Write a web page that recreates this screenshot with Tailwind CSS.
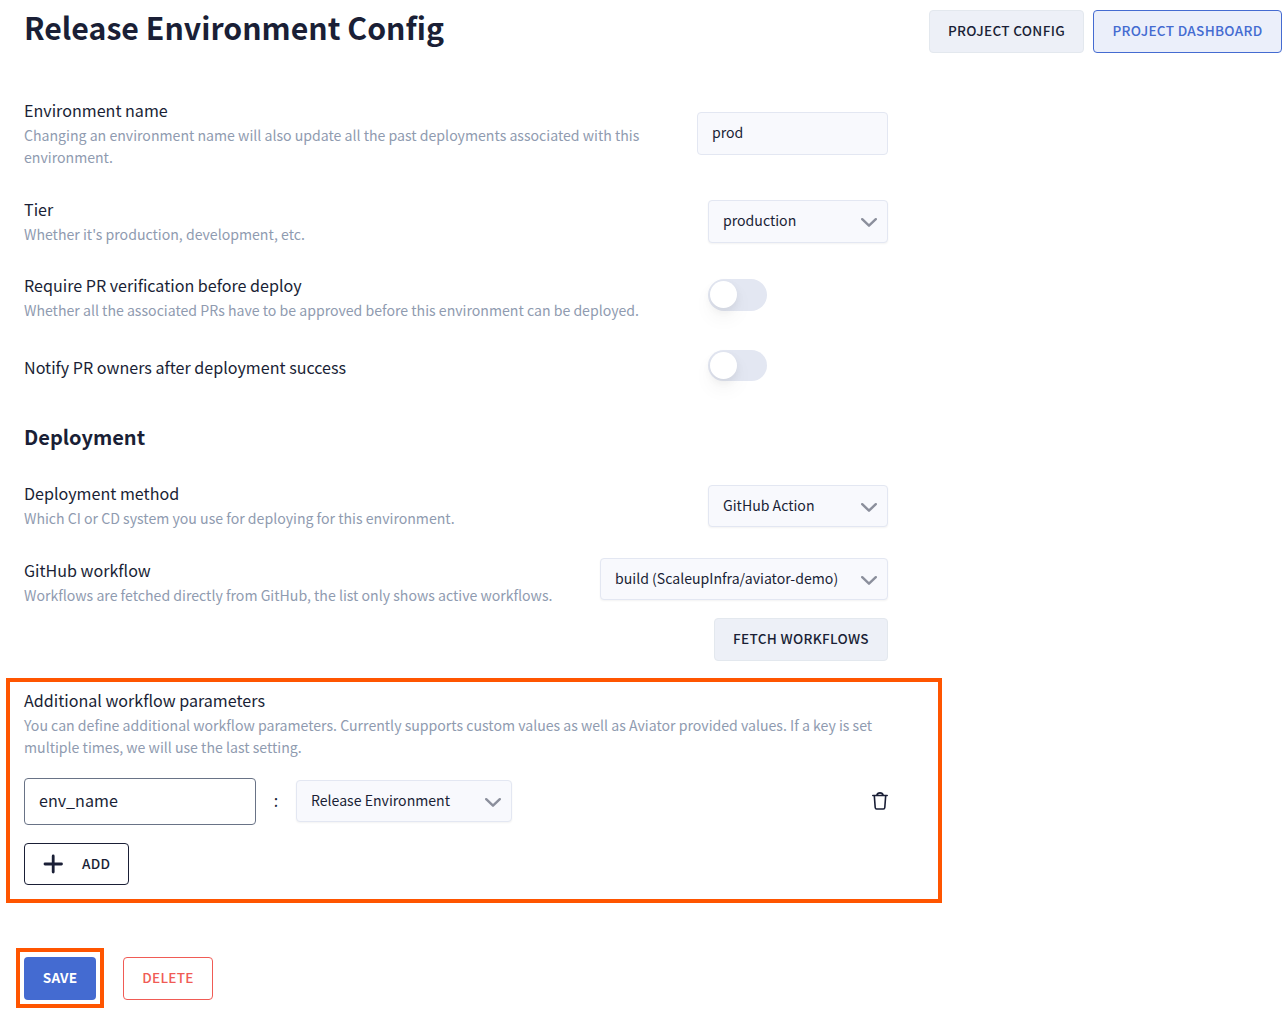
<!DOCTYPE html>
<html lang="en">
<head>
<meta charset="utf-8">
<title>Release Environment Config</title>
<script src="https://cdn.jsdelivr.net/npm/@tailwindcss/browser@4"></script>
</head>
<body class="bg-white text-[#1a1f36] font-['Noto_Sans_CJK_SC','Noto_Sans',sans-serif] w-[1287px] h-[1012px] overflow-hidden">
<header class="flex justify-between items-start pl-6 pr-[5px] pt-[10px] h-[97px]">
  <h1 class="-mt-[2px] text-[30.250px] leading-[38px] font-bold"><span>Release Environment Config</span></h1>
  <nav class="flex gap-[9px] text-[13.600px] tracking-[0.3px] font-medium">
    <button class="w-[155px] h-[43px] pb-[2px] rounded bg-[#edf0f7] border border-[#e3e8ee]"><span>PROJECT CONFIG</span></button>
    <button class="w-[189px] h-[43px] pb-[2px] rounded bg-[#ebeffa] border border-[#446bd1] text-[#446bd1]"><span>PROJECT DASHBOARD</span></button>
  </nav>
</header>
<main class="pl-6 w-[888px]">
  <section class="flex justify-between items-start h-[99px]">
    <div class="w-[640px]">
      <h3 class="text-[16.1px] leading-[27px]"><span>Environment name</span></h3>
      <p class="text-[14.110px] leading-[22px] text-[#8f9bb0]"><span>Changing an environment name will also update all the past deployments associated with this</span><br>environment.</p>
    </div>
    <div class="mt-[15px] w-[191px] h-[43px] shrink-0 rounded bg-[#f8f9fd] border border-[#e3e7f2] pl-[14px] text-[14.100px] leading-[38px]"><span>prod</span></div>
  </section>
  <section class="flex justify-between items-start h-[76px]">
    <div>
      <h3 class="text-[16.1px] leading-[27px]"><span>Tier</span></h3>
      <p class="text-[14.110px] leading-[22px] text-[#8f9bb0]"><span>Whether it's production, development, etc.</span></p>
    </div>
    <div class="mt-[4px] w-[180px] h-[43px] flex items-center justify-between rounded bg-[#f8f9fd] border border-[#e3e7f2] shadow-xs pl-[14px] pr-[10px] text-[14.100px] leading-[20px]"><span class="pb-[3px]">production</span>
      <svg class="w-4 h-[9px] mt-[2px]" viewBox="0 0 16 9" fill="none" stroke="#8b8f9c" stroke-width="2.400" stroke-linecap="round" stroke-linejoin="round"><path d="M1.200 1.200 8 7.700l6.800-6.500"/></svg></div>
  </section>
  <section class="flex justify-between items-start h-[82px]">
    <div>
      <h3 class="text-[16.1px] leading-[27px]"><span>Require PR verification before deploy</span></h3>
      <p class="text-[14.110px] leading-[22px] text-[#8f9bb0]"><span>Whether all the associated PRs have to be approved before this environment can be deployed.</span></p>
    </div>
    <div class="mt-[7px] mr-[121px] w-[59px] h-8 rounded-full bg-[#e3e7f2] p-[2px]"><div class="size-[27px] rounded-full bg-white shadow-[0_3px_8px_rgba(0,0,0,0.06),0_10px_20px_rgba(0,0,0,0.05)]"></div></div>
  </section>
  <section class="flex justify-between items-start h-[66px]">
    <h3 class="text-[16.1px] leading-[27px]"><span>Notify PR owners after deployment success</span></h3>
    <div class="-mt-[4px] mr-[121px] w-[59px] h-[31px] rounded-full bg-[#e3e7f2] p-[2px]"><div class="size-[27px] rounded-full bg-white shadow-[0_3px_8px_rgba(0,0,0,0.06),0_10px_20px_rgba(0,0,0,0.05)]"></div></div>
  </section>
  <h2 class="h-[60px] text-[20px] leading-[34px] font-bold"><span>Deployment</span></h2>
  <section class="flex justify-between items-start h-[77px]">
    <div>
      <h3 class="text-[16.1px] leading-[27px]"><span>Deployment method</span></h3>
      <p class="text-[14.110px] leading-[22px] text-[#8f9bb0]"><span>Which CI or CD system you use for deploying for this environment.</span></p>
    </div>
    <div class="mt-[5px] w-[180px] h-[42px] flex items-center justify-between rounded bg-[#f8f9fd] border border-[#e3e7f2] shadow-xs pl-[14px] pr-[10px] text-[14.100px] leading-[20px]"><span class="pb-[2px]">GitHub Action</span>
      <svg class="w-4 h-[9px] mt-[2px]" viewBox="0 0 16 9" fill="none" stroke="#8b8f9c" stroke-width="2.400" stroke-linecap="round" stroke-linejoin="round"><path d="M1.200 1.200 8 7.700l6.800-6.500"/></svg></div>
  </section>
  <section class="flex justify-between items-start h-[121px]">
    <div>
      <h3 class="text-[16.1px] leading-[27px]"><span>GitHub workflow</span></h3>
      <p class="text-[14.110px] leading-[22px] text-[#8f9bb0]"><span>Workflows are fetched directly from GitHub, the list only shows active workflows.</span></p>
    </div>
    <div class="flex flex-col items-end gap-[18px] mt-px">
      <div class="w-[288px] h-[42px] flex items-center justify-between rounded bg-[#f8f9fd] border border-[#e3e7f2] shadow-xs pl-[14px] pr-[10px] text-[14.100px] leading-[20px]"><span class="pb-[2px]">build (ScaleupInfra/aviator-demo)</span>
        <svg class="w-4 h-[9px] mt-[2px]" viewBox="0 0 16 9" fill="none" stroke="#8b8f9c" stroke-width="2.400" stroke-linecap="round" stroke-linejoin="round"><path d="M1.200 1.200 8 7.700l6.800-6.500"/></svg></div>
      <button class="w-[174px] h-[43px] pb-[2px] rounded bg-[#edf0f7] border border-[#e3e8ee] text-[13.600px] tracking-[0.3px] font-medium"><span>FETCH WORKFLOWS</span></button>
    </div>
  </section>
  <section class="-ml-[18px] w-[936px] h-[225px] border-4 border-[#ff5500] pl-[14px] pt-[5px]">
    <h3 class="text-[16.1px] leading-[27px]"><span>Additional workflow parameters</span></h3>
    <p class="text-[14.110px] leading-[22px] text-[#8f9bb0]"><span>You can define additional workflow parameters. Currently supports custom values as well as Aviator provided values. If a key is set</span><br>multiple times, we will use the last setting.</p>
    <div class="flex items-center mt-[20px] h-[47px] w-[864px]">
      <div class="w-[232px] h-[47px] rounded bg-white border border-[#697386] pl-[14px] text-[16.1px] leading-[43px]"><span>env_name</span></div>
      <span class="w-10 -mt-[2px] text-center text-[16.1px]">:</span>
      <div class="-mt-px w-[216px] h-[42px] flex items-center justify-between rounded bg-[#f8f9fd] border border-[#e3e7f2] shadow-xs pl-[14px] pr-[10px] text-[14.100px] leading-[20px]"><span class="pb-[2px]">Release Environment</span>
        <svg class="w-4 h-[9px] mt-[2px]" viewBox="0 0 16 9" fill="none" stroke="#8b8f9c" stroke-width="2.400" stroke-linecap="round" stroke-linejoin="round"><path d="M1.200 1.200 8 7.700l6.800-6.500"/></svg></div>
      <svg class="ml-auto -mt-[1px] w-4 h-[18px]" viewBox="0 0 16 18" fill="none" stroke="#1a1f36" stroke-width="1.600" stroke-linecap="round" stroke-linejoin="round"><path d="M.8 3.500h14.400M2.300 3.500l.9 12c.1.900.5 1.500 1.400 1.500h6.800c.9 0 1.300-.6 1.400-1.500l.9-12M4.800 3.300C5.200 1.600 6.200.9 8 .9s2.800.7 3.200 2.400"/></svg>
    </div>
    <button class="mt-[18px] w-[105px] h-[42px] flex items-center rounded border border-[#1a1f36] pl-[18px] text-[13.600px] tracking-[0.3px] font-medium">
      <svg class="w-5 h-5 mr-[19px]" viewBox="0 0 20 20" stroke="#1a1f36" stroke-width="2.800" stroke-linecap="round"><path d="M10.200 2v16M2 10h16.500"/></svg><span class="pb-[2px]">ADD</span></button>
  </section>
  <footer class="flex -ml-2 mt-[45px] gap-[19px]">
    <div class="w-[88px] h-[60px] border-4 border-[#ff5500] pt-[5px] pl-1">
      <button class="w-[72px] h-[43px] pb-[2px] rounded bg-[#446bd1] text-white text-[13.600px] tracking-[0.2px] font-bold"><span>SAVE</span></button>
    </div>
    <button class="mt-[9px] w-[90px] h-[43px] pb-[2px] rounded border border-[#f05b55] text-[#f05b55] text-[13.600px] tracking-[0.3px] font-medium"><span>DELETE</span></button>
  </footer>
</main>
</body>
</html>
